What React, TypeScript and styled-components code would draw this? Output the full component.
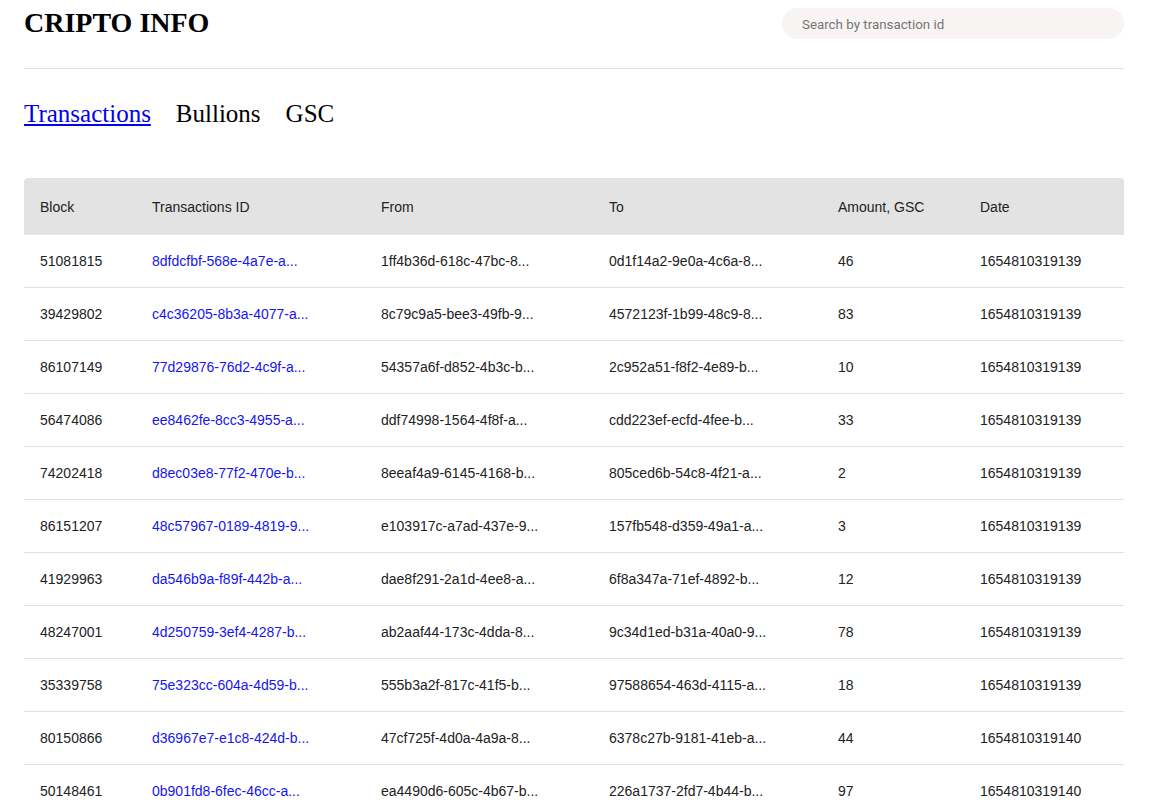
import styled, { createGlobalStyle } from "styled-components";

type Tx = {
  block: string;
  id: string;
  from: string;
  to: string;
  amount: number;
  date: string;
};

const transactions: Tx[] = [
  { block: "51081815", id: "8dfdcfbf-568e-4a7e-a...", from: "1ff4b36d-618c-47bc-8...", to: "0d1f14a2-9e0a-4c6a-8...", amount: 46, date: "1654810319139" },
  { block: "39429802", id: "c4c36205-8b3a-4077-a...", from: "8c79c9a5-bee3-49fb-9...", to: "4572123f-1b99-48c9-8...", amount: 83, date: "1654810319139" },
  { block: "86107149", id: "77d29876-76d2-4c9f-a...", from: "54357a6f-d852-4b3c-b...", to: "2c952a51-f8f2-4e89-b...", amount: 10, date: "1654810319139" },
  { block: "56474086", id: "ee8462fe-8cc3-4955-a...", from: "ddf74998-1564-4f8f-a...", to: "cdd223ef-ecfd-4fee-b...", amount: 33, date: "1654810319139" },
  { block: "74202418", id: "d8ec03e8-77f2-470e-b...", from: "8eeaf4a9-6145-4168-b...", to: "805ced6b-54c8-4f21-a...", amount: 2, date: "1654810319139" },
  { block: "86151207", id: "48c57967-0189-4819-9...", from: "e103917c-a7ad-437e-9...", to: "157fb548-d359-49a1-a...", amount: 3, date: "1654810319139" },
  { block: "41929963", id: "da546b9a-f89f-442b-a...", from: "dae8f291-2a1d-4ee8-a...", to: "6f8a347a-71ef-4892-b...", amount: 12, date: "1654810319139" },
  { block: "48247001", id: "4d250759-3ef4-4287-b...", from: "ab2aaf44-173c-4dda-8...", to: "9c34d1ed-b31a-40a0-9...", amount: 78, date: "1654810319139" },
  { block: "35339758", id: "75e323cc-604a-4d59-b...", from: "555b3a2f-817c-41f5-b...", to: "97588654-463d-4115-a...", amount: 18, date: "1654810319139" },
  { block: "80150866", id: "d36967e7-e1c8-424d-b...", from: "47cf725f-4d0a-4a9a-8...", to: "6378c27b-9181-41eb-a...", amount: 44, date: "1654810319140" },
  { block: "50148461", id: "0b901fd8-6fec-46cc-a...", from: "ea4490d6-605c-4b67-b...", to: "226a1737-2fd7-4b44-b...", amount: 97, date: "1654810319140" },
];

export default function App() {
  return (
    <>
      <GlobalStyle />
      <Page>
        <Header>
          <Title>CRIPTO INFO</Title>
          <Search placeholder="Search by transaction id" />
        </Header>
        <Nav>
          <NavLink href="#" $active>
            Transactions
          </NavLink>
          <NavLink href="#">Bullions</NavLink>
          <NavLink href="#">GSC</NavLink>
        </Nav>
        <Table>
          <HeadRow>
            <Cell>Block</Cell>
            <Cell>Transactions ID</Cell>
            <Cell>From</Cell>
            <Cell>To</Cell>
            <Cell>Amount, GSC</Cell>
            <Cell>Date</Cell>
          </HeadRow>
          {transactions.map((tx) => (
            <Row key={tx.block}>
              <Cell>{tx.block}</Cell>
              <Cell>
                <IdLink href="#">{tx.id}</IdLink>
              </Cell>
              <Cell>{tx.from}</Cell>
              <Cell>{tx.to}</Cell>
              <Cell>{tx.amount}</Cell>
              <Cell>{tx.date}</Cell>
            </Row>
          ))}
        </Table>
      </Page>
    </>
  );
}

const GlobalStyle = createGlobalStyle`
  body {
    margin: 0;
    background: #fff;
    font-family: "Liberation Serif", "Times New Roman", serif;
  }
`;

const Page = styled.div`
  width: 1100px;
  padding: 0 24px;
`;

const Header = styled.header`
  display: flex;
  justify-content: space-between;
  align-items: flex-start;
  height: 69px;
  border-bottom: 1px solid #e0e0e0;
  box-sizing: border-box;
`;

const Title = styled.h1`
  margin: 5px 0 0;
  font-size: 28px;
  font-weight: bold;
  color: #000;
  line-height: 36px;
`;

const Search = styled.input`
  margin-top: 8px;
  width: 342px;
  height: 31px;
  box-sizing: border-box;
  padding: 1px 20px 0;
  border: none;
  border-radius: 16px;
  background: #f8f4f4;
  font-family: Roboto, "Liberation Sans", sans-serif;
  font-size: 13.333px;
  color: #333;
  outline: none;

  &::placeholder {
    color: #757575;
  }
`;

const Nav = styled.nav`
  display: flex;
  gap: 25px;
  margin-top: 29px;
  height: 32px;
  align-items: center;
`;

const NavLink = styled.a<{ $active?: boolean }>`
  font-size: 25px;
  color: ${(p) => (p.$active ? "#0000ee" : "#000")};
  text-decoration: ${(p) => (p.$active ? "underline" : "none")};
`;

const Table = styled.div`
  margin-top: 48px;
  font-family: "Liberation Sans", Arial, sans-serif;
  font-size: 14px;
  color: #222;
`;

const HeadRow = styled.div`
  display: grid;
  grid-template-columns: 112px 229px 228px 229px 142px 1fr;
  height: 57px;
  align-items: center;
  background: #e3e3e3;
  border-radius: 4px 4px 0 0;
`;

const Row = styled.div`
  display: grid;
  grid-template-columns: 112px 229px 228px 229px 142px 1fr;
  height: 53px;
  align-items: center;
  border-bottom: 1px solid #e0e0e0;
  box-sizing: border-box;
`;

const Cell = styled.div`
  padding-left: 16px;
  white-space: nowrap;
`;

const IdLink = styled.a`
  color: #1515f0;
  text-decoration: none;
`;
